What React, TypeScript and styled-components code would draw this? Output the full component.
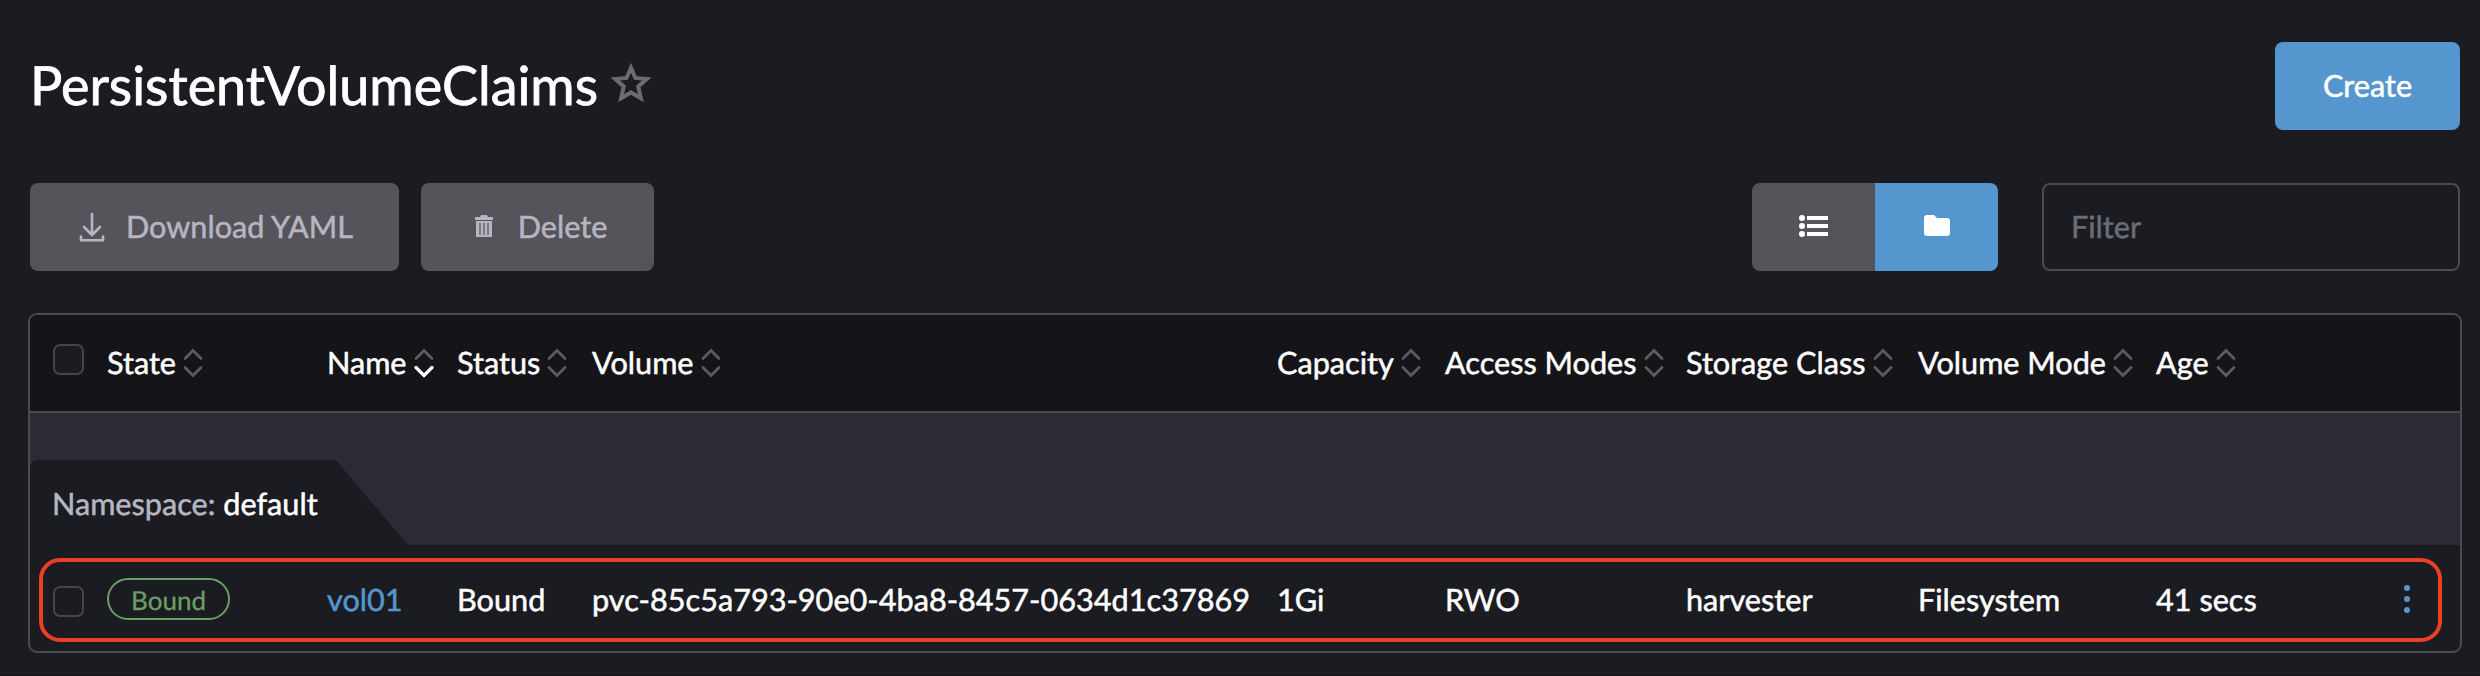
import React from "react";
import styled, { createGlobalStyle } from "styled-components";

const GlobalStyle = createGlobalStyle`
  * { box-sizing: border-box; }
  body { margin: 0; background: #1b1c21; color: #fff; font-family: Lato, sans-serif; font-size: 30.65px; text-rendering: geometricPrecision; -webkit-text-stroke: 0.5px currentColor; }
  button, input { font: inherit; }
`;

const Page = styled.main`
  height: 676px;
  padding: 42px 18px 0 28px;
  background: #1b1c21;
  border-bottom: 1px solid #141419;
`;

const Header = styled.header`
  display: flex;
  justify-content: space-between;
  align-items: center;
  height: 88px;
  padding: 0 2px;
`;

const Title = styled.h1`
  display: flex;
  align-items: center;
  margin: -3px 0 0;
  font-size: 53.9px;
  font-weight: 400;
  line-height: 62px;
  -webkit-text-stroke-width: 0.8px;
`;

const StarIcon = styled.svg`
  width: 44px;
  height: 42px;
  margin: -3px 0 0 11px;
`;

const Button = styled.button<{ $primary?: boolean; $width: number }>`
  display: flex;
  align-items: center;
  justify-content: center;
  width: ${(p) => p.$width}px;
  height: 88px;
  padding: 0 0 1px;
  border: 0;
  border-radius: 8px;
  color: ${(p) => (p.$primary ? "#fff" : "#b6b6c2")};
  background: ${(p) => (p.$primary ? "#5696ce" : "#55545a")};
`;

const ButtonIcon = styled.svg`
  width: 28px;
  height: 32px;
  margin: 0 20px 0 2px;
`;

const Toolbar = styled.div`
  display: flex;
  height: 88px;
  margin-top: 53px;
  padding: 0 2px;
`;

const Actions = styled.div`
  display: flex;
  gap: 22px;
  flex: 1;
`;

const Toggle = styled.div`
  display: flex;
  margin-right: 44px;
  border-radius: 8px;
  overflow: hidden;
`;

const ToggleItem = styled.div<{ $active?: boolean }>`
  display: flex;
  align-items: center;
  justify-content: center;
  width: 123px;
  padding-bottom: 3px;
  background: ${(p) => (p.$active ? "#5696ce" : "#55545a")};
`;

const Filter = styled.input`
  width: 418px;
  height: 88px;
  padding: 0 27px 1px;
  border: 2px solid #4a4b50;
  border-radius: 8px;
  background: transparent;
  color: #fff;
  text-rendering: inherit;
  &::placeholder { color: #6c6c76; opacity: 1; }
`;

const Table = styled.section`
  margin-top: 42px;
  height: 340px;
  border: 2px solid #4a4b50;
  border-radius: 9px;
  overflow: hidden;
`;

const Row = styled.div`
  display: grid;
  grid-template-columns: 54px 220px 130px 135px 685px 168px 241px 232px 238px 1fr;
  align-items: center;
  padding-left: 23px;
`;

const HeadRow = styled(Row)`
  height: 98px;
  background: #151419;
  border-bottom: 2px solid #4a4b50;
`;

const BodyRow = styled(Row)`
  position: relative;
  height: 106px;
  padding-top: 2px;
`;

const Highlight = styled.div`
  position: absolute;
  left: 9px;
  right: 18px;
  top: 13px;
  height: 84px;
  border: 4px solid #ec3f23;
  border-radius: 21px;
`;

const Checkbox = styled.div<{ $shift?: number }>`
  width: 31px;
  height: 31px;
  margin-top: ${(p) => p.$shift ?? 0}px;
  border: 2px solid #45464c;
  border-radius: 7px;
  background: #1b1c21;
`;

const HeadCell = styled.div`
  display: flex;
  align-items: center;
  white-space: nowrap;
  margin-top: -1px;
`;

const SortIcon = styled.svg`
  width: 20px;
  height: 30px;
  margin-left: 7px;
`;

const Cell = styled.div`
  white-space: nowrap;
`;

const NameLink = styled.a`
  color: #5696ce;
`;

const Badge = styled.span`
  display: flex;
  align-items: center;
  justify-content: center;
  width: 123px;
  height: 42px;
  padding-top: 1px;
  border: 2px solid #6a9e64;
  border-radius: 21px;
  font-size: 26px;
  color: #6a9e64;
  -webkit-text-stroke-width: 0.3px;
`;

const AgeCell = styled(Cell)`
  display: flex;
  align-items: center;
  justify-content: space-between;
  padding-right: 50px;
`;

const GroupBand = styled.div`
  display: flex;
  align-items: flex-end;
  height: 132px;
  background: #2b2b34;
`;

const GroupTab = styled.div`
  display: flex;
  align-items: center;
  height: 85px;
  padding: 1px 0 0 22px;
  width: 302px;
  border-radius: 8px 0 0 0;
  background: #1b1c21;
  white-space: pre;
`;

const GroupLabel = styled.span`
  color: #b6b6c2;
`;

const TabSlope = styled.svg`
  width: 76px;
  height: 85px;
`;

const columns = ["State", "Name", "Status", "Volume", "Capacity", "Access Modes", "Storage Class", "Volume Mode", "Age"];
const values = ["Bound", "pvc-85c5a793-90e0-4ba8-8457-0634d1c37869", "1Gi", "RWO", "harvester", "Filesystem"];

function Sort({ active }: { active: boolean }) {
  return (
    <SortIcon viewBox="0 0 20 30" fill="none" strokeWidth="2.8" strokeLinecap="round">
      <path d="M2 10.5 10 2.5l8 8" stroke="#5b5b60" />
      <path d="M2 19.5 10 27.5l8-8" stroke={active ? "#fff" : "#5b5b60"} strokeWidth={active ? 3.2 : 2.8} />
    </SortIcon>
  );
}

export default function App() {
  return (
    <Page>
      <GlobalStyle />
      <Header>
        <Title>
          PersistentVolumeClaims
          <StarIcon viewBox="0 0 42 40" fill="none" stroke="#6c6c70" strokeWidth="3.8">
            <path d="M21 5.500 25.200 15.200 36 16.200 27.900 23.400 30.400 34.500 21 29 11.600 34.500 14.100 23.400 6 16.200 16.800 15.200Z" />
          </StarIcon>
        </Title>
        <Button $primary $width={185}>Create</Button>
      </Header>
      <Toolbar>
        <Actions>
          <Button $width={369}>
            <ButtonIcon viewBox="0 0 28 32" fill="none" stroke="currentColor" strokeWidth="2.6" strokeLinecap="round" strokeLinejoin="round">
              <path d="M14 3v20.500M6 16l8 8 8-8M3 25.500v3.800h22v-3.800" />
            </ButtonIcon>
            Download YAML
          </Button>
          <Button $width={233}>
            <ButtonIcon viewBox="0 0 28 32" fill="currentColor">
              <path d="M5 6h5l1-2h6l1 2h5v3H5zM6 10h16v16H6z" />
              <path d="M10 12v12M14 12v12M18 12v12" stroke="#55545a" strokeWidth="1.2" />
            </ButtonIcon>
            Delete
          </Button>
        </Actions>
        <Toggle>
          <ToggleItem>
            <svg width="30" height="24" fill="#fff">
              <circle cx="3" cy="4" r="3" /><circle cx="3" cy="12" r="3" /><circle cx="3" cy="20" r="3" />
              <path d="M8 2h21v4H8zM8 10h21v4H8zM8 18h21v4H8z" />
            </svg>
          </ToggleItem>
          <ToggleItem $active>
            <svg width="26" height="21" fill="#fff">
              <path d="M3 0h7l3 3h10a3 3 0 0 1 3 3v12a3 3 0 0 1-3 3H3a3 3 0 0 1-3-3V3a3 3 0 0 1 3-3z" />
            </svg>
          </ToggleItem>
        </Toggle>
        <Filter placeholder="Filter" />
      </Toolbar>
      <Table>
        <HeadRow>
          <Checkbox $shift={-8} />
          {columns.map((c) => (
            <HeadCell key={c}>{c}<Sort active={c === "Name"} /></HeadCell>
          ))}
        </HeadRow>
        <GroupBand>
          <GroupTab><GroupLabel>Namespace: </GroupLabel>default</GroupTab>
          <TabSlope viewBox="0 0 76 85" fill="#1b1c21">
            <path d="M0 0c4 0 6 2 9 6L76 85H0z" />
          </TabSlope>
        </GroupBand>
        <BodyRow>
          <Checkbox $shift={5} />
          <Cell><Badge>Bound</Badge></Cell>
          <Cell><NameLink>vol01</NameLink></Cell>
          {values.map((v) => <Cell key={v}>{v}</Cell>)}
          <AgeCell>
            41 secs
            <svg width="6" height="30" fill="#5696ce">
              <circle cx="3" cy="4" r="3" /><circle cx="3" cy="15" r="3" /><circle cx="3" cy="26" r="3" />
            </svg>
          </AgeCell>
          <Highlight />
        </BodyRow>
      </Table>
    </Page>
  );
}
